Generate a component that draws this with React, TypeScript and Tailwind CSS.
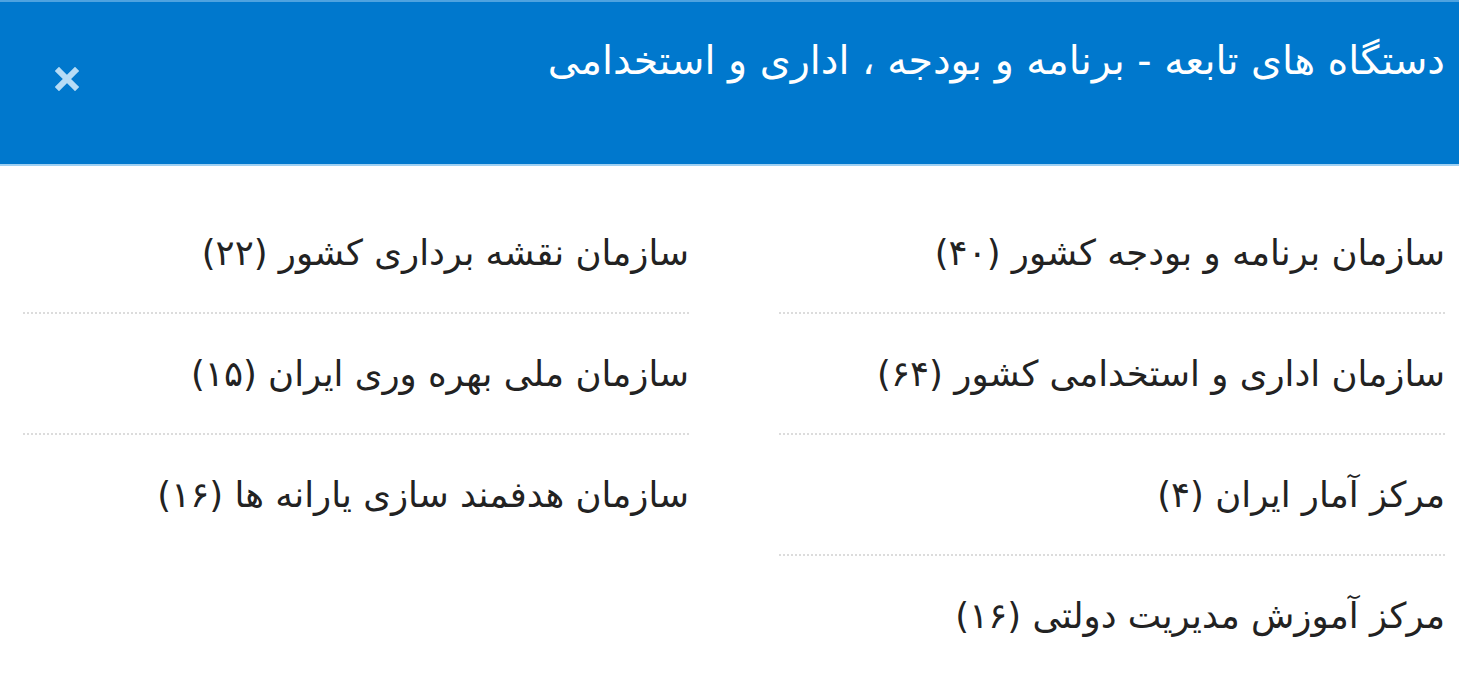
const rightItems = [
  'سازمان برنامه و بودجه کشور (۴۰)',
  'سازمان اداری و استخدامی کشور (۶۴)',
  'مرکز آمار ایران (۴)',
  'مرکز آموزش مدیریت دولتی (۱۶)',
]

const leftItems = [
  'سازمان نقشه برداری کشور (۲۲)',
  'سازمان ملی بهره وری ایران (۱۵)',
  'سازمان هدفمند سازی یارانه ها (۱۶)',
]

function Column({ items }: { items: string[] }) {
  return (
    <div className="flex-1 flex flex-col">
      {items.map((t, i) => (
        <div
          key={t}
          className={
            'py-[37.5px] leading-[44px] text-[35.5px] text-[#222] ' +
            (i < items.length - 1 ? 'border-b-2 border-dotted border-[#dcdcdc]' : '')
          }
        >
          {t}
        </div>
      ))}
    </div>
  )
}

export default function App() {
  return (
    <div dir="rtl" className="w-[1459px] h-[691px] bg-white overflow-hidden" style={{ fontFamily: '"DejaVu Sans", sans-serif' }}>
      <div className="h-[166px] bg-[#0078cd] border-t-2 border-t-[#4ea3e0] border-b-2 border-b-[#9fd0f2] flex items-start justify-between pr-[14px] pl-[55px]">
        <h1 className="text-white text-[39.6px] leading-[48px] mt-[34px]">
          دستگاه های تابعه - برنامه و بودجه ، اداری و استخدامی
        </h1>
        <button className="mt-[65px]">
          <svg width="24" height="24" viewBox="0 0 24 24">
            <path d="M4 4 L20 20 M20 4 L4 20" stroke="#b6dcf6" strokeWidth="6" strokeLinecap="square" />
          </svg>
        </button>
      </div>
      <div className="flex gap-[90px] pr-[14px] pl-[23px] pt-[27px]">
        <Column items={rightItems} />
        <Column items={leftItems} />
      </div>
    </div>
  )
}
